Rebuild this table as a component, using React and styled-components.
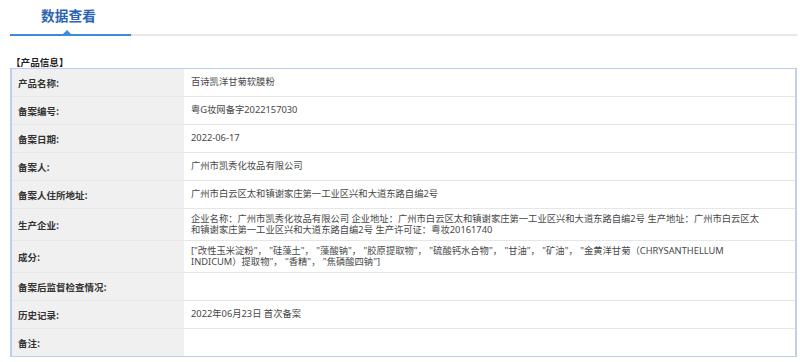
import React from "react";
import styled, { createGlobalStyle } from "styled-components";

const Global = createGlobalStyle`
  html, body { margin: 0; padding: 0; background: #fff; }
  body { font-family: "Noto Sans CJK SC", "Noto Sans", sans-serif; color: #333; }
`;

const Page = styled.div`
  width: 800px;
  height: 362px;
  padding: 0 3px 0 10px;
  box-sizing: border-box;
  overflow: hidden;
`;

const TabBar = styled.div`
  display: flex;
  height: 36px;
  border-bottom: 2px solid #e8e8e8;
  box-sizing: border-box;
`;

const Tab = styled.div`
  position: relative;
  width: 121px;
  display: flex;
  justify-content: center;
  align-items: flex-start;
  padding-top: 5px;
  padding-right: 4px;
  box-sizing: border-box;
  font-size: 13.6px;
  font-weight: 700;
  color: #2c64b3;
  letter-spacing: 0.2px;
  margin-bottom: -2px;
  border-bottom: 2px solid #3b8be0;
  &::after {
    content: "";
    position: absolute;
    left: 53px;
    bottom: 0;
    border-left: 4px solid transparent;
    border-right: 4px solid transparent;
    border-bottom: 4px solid #3b8be0;
  }
`;

const SectionTitle = styled.div`
  margin-top: 20px;
  padding-left: 1px;
  font-size: 9.6px;
  font-weight: 700;
  color: #222;
  line-height: 12px;
  height: 12px;
`;

const Table = styled.table`
  width: 787px;
  border-collapse: collapse;
  border: 1px solid #bccfee;
  border-left: 2px solid #bccfee;
  border-right: 2px solid #bccfee;
  font-size: 9.5px;
  table-layout: fixed;
`;

const Row = styled.tr`
  height: ${(p) => (p.$tall ? 32 : 28)}px;
  border-top: 1px solid #e6e6e6;
  &:first-child { border-top: none; }
`;

const Label = styled.td`
  width: 163px;
  background: #f0f0f0;
  padding: 0 0 0 6px;
  font-weight: 700;
  color: #333;
  vertical-align: middle;
`;

const Value = styled.td`
  padding: 0 30px 0 7px;
  font-family: "Noto Sans", "Noto Sans CJK SC", sans-serif;
  font-size: 9.3px;
  color: #474747;
  vertical-align: middle;
  line-height: 10.4px;
`;

const ingredients = [
  "改性玉米淀粉",
  "硅藻土",
  "藻酸钠",
  "胶原提取物",
  "硫酸钙水合物",
  "甘油",
  "矿油",
  "金黄洋甘菊（CHRYSANTHELLUM INDICUM）提取物",
  "香精",
  "焦磷酸四钠",
];

const rows = [
  ["产品名称:", "百诗凯洋甘菊软膜粉"],
  ["备案编号:", "粤G妆网备字2022157030"],
  ["备案日期:", "2022-06-17"],
  ["备案人:", "广州市凯秀化妆品有限公司"],
  ["备案人住所地址:", "广州市白云区太和镇谢家庄第一工业区兴和大道东路自编2号"],
  [
    "生产企业:",
    "企业名称：广州市凯秀化妆品有限公司 企业地址：广州市白云区太和镇谢家庄第一工业区兴和大道东路自编2号 生产地址：广州市白云区太和镇谢家庄第一工业区兴和大道东路自编2号 生产许可证：粤妆20161740",
    true,
  ],
  ["成分:", "[" + ingredients.map((s) => `"${s}"`).join("， ") + "]", true],
  ["备案后监督检查情况:", ""],
  ["历史记录:", "2022年06月23日 首次备案"],
  ["备注:", ""],
];

export default function App() {
  return (
    <Page>
      <Global />
      <TabBar>
        <Tab>数据查看</Tab>
      </TabBar>
      <SectionTitle>【产品信息】</SectionTitle>
      <Table>
        <colgroup>
          <col style={{ width: 173 }} />
          <col />
        </colgroup>
        <tbody>
          {rows.map(([k, v, tall]) => (
            <Row key={k} $tall={tall}>
              <Label>{k}</Label>
              <Value>{v}</Value>
            </Row>
          ))}
        </tbody>
      </Table>
    </Page>
  );
}
